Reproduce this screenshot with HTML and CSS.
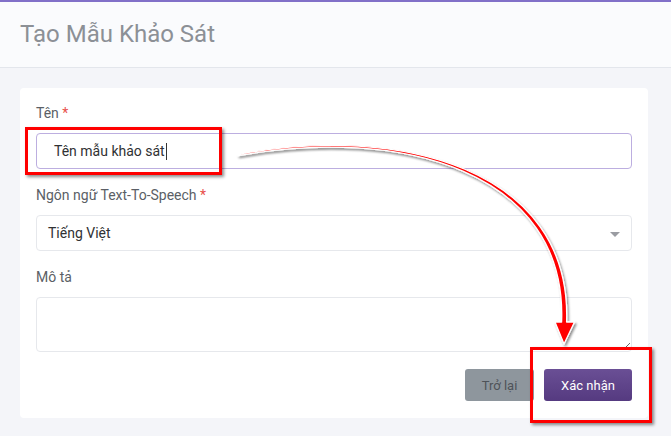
FILE: index.html
```html
<!DOCTYPE html>
<html lang="vi">
<head>
<meta charset="utf-8">
<title>Tạo Mẫu Khảo Sát</title>
<link rel="stylesheet" href="styles.css">
</head>
<body>
<div class="page">
  <header class="page-header">
    <h1 class="page-title">Tạo Mẫu Khảo Sát</h1>
  </header>
  <main class="content">
    <form class="card">
      <div class="field">
        <label class="label">Tên <span class="req">*</span></label>
        <div class="input input-focus"><span class="input-text">Tên mẫu khảo sát</span><span class="caret"></span></div>
      </div>
      <div class="field">
        <label class="label">Ngôn ngữ Text-To-Speech <span class="req">*</span></label>
        <div class="input select"><span class="select-text">Tiếng Việt</span><span class="select-arrow"></span></div>
      </div>
      <div class="field field-last">
        <label class="label">Mô tả</label>
        <textarea class="textarea"></textarea>
      </div>
      <div class="actions">
        <button type="button" class="btn btn-back">Trở lại</button>
        <button type="button" class="btn btn-primary">Xác nhận</button>
      </div>
    </form>
  </main>

  <div class="highlight hl-input"></div>
  <div class="highlight hl-button"></div>
  <svg class="arrow" width="671" height="436" viewBox="0 0 671 436">
    <defs>
      <filter id="sh" x="-10%" y="-10%" width="130%" height="130%">
        <feDropShadow dx="1.5" dy="2" stdDeviation="1.2" flood-color="#000" flood-opacity="0.45"/>
      </filter>
    </defs>
    <g filter="url(#sh)">
      <path d="M238 154.4 C 399.8 123.8, 571.8 168.8, 566.6 322 L 574.5 322 L 564 344 L 555 322 L 561.6 322 C 567.5 171, 400.2 126.2, 238 155.6 Z"
            fill="#ff0000" stroke="#ffffff" stroke-width="1.3" stroke-linejoin="round"/>
    </g>
  </svg>
</div>
</body>
</html>
```
FILE: styles.css
```css
* { box-sizing: border-box; }
html, body { margin: 0; padding: 0; }
body {
  width: 671px;
  height: 436px;
  overflow: hidden;
  font-family: Roboto, "Noto Sans", sans-serif;
  background: #f4f5f9;
}
.page { position: relative; width: 671px; height: 436px; }
.page-header {
  height: 68px;
  background: #fafbfd;
  border-top: 2px solid #8170c8;
  border-bottom: 1px solid #e3e6ec;
  display: flex;
  align-items: center;
  padding-left: 20px;
}
.page-title {
  margin: 0 0 2px;
  font-size: 24px;
  font-weight: 400;
  color: #8c9096;
}
.content { padding: 20px 23px 0 20px; }
.card {
  background: #fff;
  border-radius: 4px;
  padding: 15px 16px 16px;
  height: 330px;
}
.field { margin-bottom: 16px; }
.field-last { margin-bottom: 17px; }
.label {
  display: block;
  font-size: 14px;
  line-height: 20px;
  color: #5b5f66;
  margin-bottom: 10px;
}
.req { color: #e8504a; }
.input {
  height: 36px;
  border: 1px solid #e6e8ec;
  border-radius: 4px;
  display: flex;
  align-items: center;
  font-size: 14px;
  color: #303133;
}
.input-focus {
  border-color: #bcaee0;
  padding-left: 17px;
}
.caret {
  display: inline-block;
  width: 1px;
  height: 17px;
  background: #333;
  margin-left: 1px;
}
.select { padding-left: 11px; padding-right: 11px; justify-content: space-between; }
.select-arrow {
  width: 0; height: 0;
  border-left: 5px solid transparent;
  border-right: 5px solid transparent;
  border-top: 5px solid #9a9ca2;
  margin-top: 2px;
}
.textarea {
  display: block;
  width: 100%;
  height: 55px;
  border: 1px solid #e6e8ec;
  border-radius: 4px;
  font-family: inherit;
  font-size: 14px;
  resize: vertical;
  outline: none;
  margin: 0;
}
.actions {
  display: flex;
  justify-content: flex-end;
  gap: 10px;
}
.btn {
  height: 32px;
  border: none;
  border-radius: 3px;
  font-family: inherit;
  font-size: 13px;
  padding: 0;
}
.btn-back {
  width: 69px;
  background: #8e969d;
  color: #4e5359;
}
.btn-primary {
  width: 88px;
  background: linear-gradient(#6a4f95, #553a80);
  color: #fff;
}
.highlight {
  position: absolute;
  border: 3px solid #ff0000;
  box-shadow: 2px 2px 3px rgba(0,0,0,0.45);
}
.hl-input { left: 25px; top: 127px; width: 197px; height: 48px; }
.hl-button { left: 530px; top: 347px; width: 122px; height: 76px; }
.arrow { position: absolute; left: 0; top: 0; pointer-events: none; }
```
